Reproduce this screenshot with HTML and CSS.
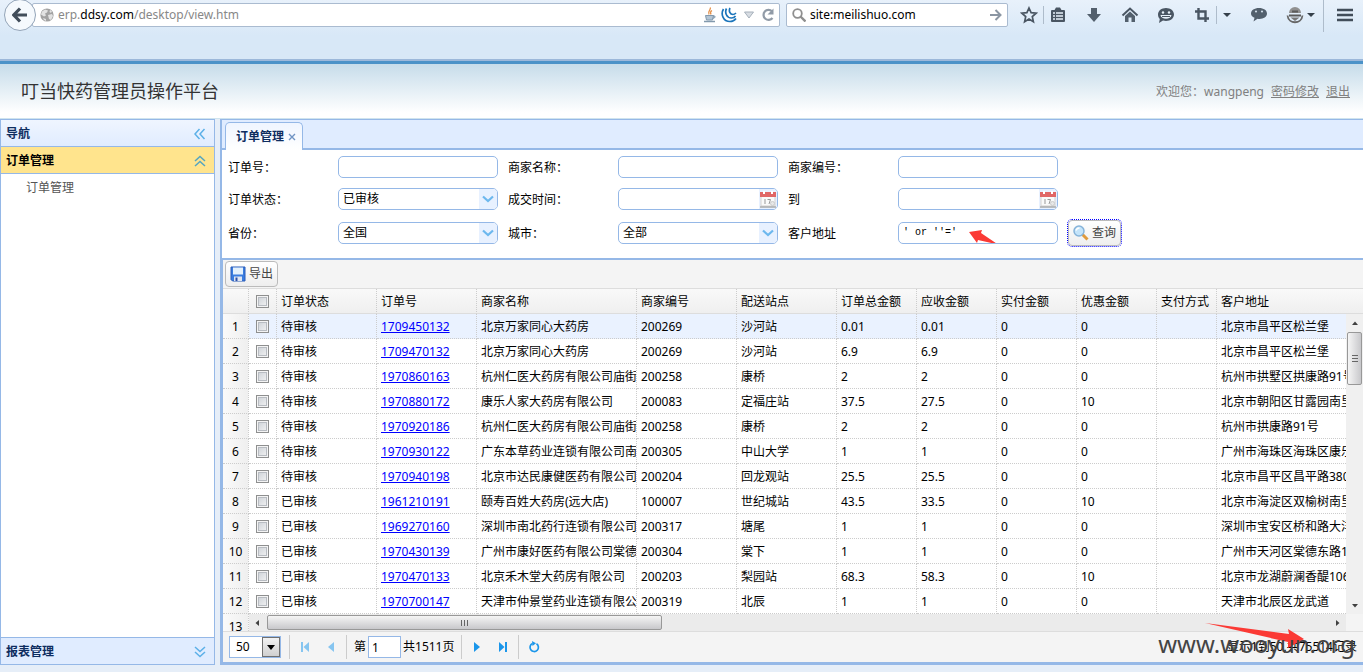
FILE: index.html
```html
<!DOCTYPE html>
<html lang="zh-CN">

<head>
    <meta charset="UTF-8">
    <meta name="viewport" content="width=device-width, initial-scale=1.0">
    <title>叮当快药管理员操作平台</title>
    <link rel="stylesheet" href="styles.css">
</head>

<body>
    <!-- 浏览器工具栏 -->
    <div class="browser">
        <button class="back" aria-label="后退">
            <svg width="16" height="16" viewBox="0 0 16 16"><path d="M8 1.5L1.8 8 8 14.5M2.5 8H15" fill="none" stroke="#414d5a" stroke-width="3.2"/></svg>
        </button>
        <div class="address">
            <svg width="14" height="14" viewBox="0 0 14 14"><circle cx="7" cy="7" r="6.6" fill="#a2a2a2"/><path d="M2 3.5l3-2 3 1-1 2-2 1 1 2-2 1-3-2zM8 7l4-1 1 2-2 4-2-1zM10 2l2 1-1 2-1.500-1zM3 10l3 1 0 2-2-1z" fill="#e2e2e2"/></svg>
            <span class="url">erp.<b>ddsy.com</b>/desktop/view.htm</span>
            <svg width="14" height="16" viewBox="0 0 14 16"><path d="M7 0.500c2 2-3 3.500-1 7M9 3.500c-2 1-2 2-1 4" fill="none" stroke="#e5914a" stroke-width="1.300"/><path d="M2.500 8.500h8l-1 4.500h-6zM10 9c3-.5 3 2-.5 2.500" fill="#b4c5d4" stroke="#8299ad"/><path d="M1 14.500h11" stroke="#8299ad" stroke-width="1.500"/></svg>
            <svg width="16" height="16" viewBox="0 0 16 16"><path d="M2.500 2C-.5 7 2 14.500 9 14.500c3 0 4.500-1 6-3M5.500 1.500c-2 4 0 9.500 5 9.500 2 0 3-.5 4-2M9 1c-1.500 3 0 6.500 3 6.500 1.500 0 2-.5 3-1.500" fill="none" stroke="#1b75bb" stroke-width="1.700"/></svg>
            <svg class="drop" width="10" height="8" viewBox="0 0 10 8"><path d="M.5 1h9L5 7z" fill="#d8dde3" stroke="#a6b0bb"/></svg>
            <svg width="14" height="14" viewBox="0 0 14 14"><path d="M11 3.300A5 5 0 1 0 11.500 10" fill="none" stroke="#919ba7" stroke-width="2.200"/><path d="M12.500.5v6h-6z" fill="#919ba7"/></svg>
        </div>
        <div class="search">
            <svg width="14" height="14" viewBox="0 0 14 14"><circle cx="5.500" cy="5.500" r="4.300" fill="none" stroke="#8f8f8f" stroke-width="1.800"/><path d="M8.500 8.500l5 5" stroke="#8f8f8f" stroke-width="2.400"/></svg>
            <input type="text" value="site:meilishuo.com" aria-label="搜索">
            <svg width="12" height="12" viewBox="0 0 12 12"><path d="M0 6h10M5.500 1l5 5-5 5" fill="none" stroke="#8b96a3" stroke-width="2"/></svg>
        </div>
        <div class="tools">
            <span class="group">
                <svg width="18" height="18" viewBox="0 0 18 18"><path d="M9 2l2.100 4.700 5 .5-3.800 3.400 1.100 5.100L9 13.100l-4.400 2.600 1.100-5.100L1.900 7.200l5-.5z" fill="none" stroke="#4a5663" stroke-width="1.700"/></svg>
                <i class="line"></i>
                <svg width="18" height="18" viewBox="0 0 18 18"><path d="M3 4h12a1 1 0 0 1 1 1v10a1 1 0 0 1-1 1H3a1 1 0 0 1-1-1V5a1 1 0 0 1 1-1zM5.500 4L7 1.500h4L12.500 4z" fill="#4a5663"/><path d="M4 7h2M7 7h7M4 10h2M7 10h7M4 13h2M7 13h7" stroke="#e8f1fa" stroke-width="1.500"/></svg>
            </span>
            <svg width="18" height="18" viewBox="0 0 18 18"><path d="M6 2h6v6h4l-7 8-7-8h4z" fill="#53606d"/></svg>
            <svg width="18" height="18" viewBox="0 0 18 18"><path d="M1.500 9.500L9 2.500l7.500 7" fill="none" stroke="#4a5663" stroke-width="2"/><path d="M4 10l5-4.500 5 4.500v6h-3.500v-4.500h-3V16H4z" fill="#53606d"/></svg>
            <svg width="18" height="18" viewBox="0 0 18 18"><path d="M9 2c4.500 0 8 2.800 8 6.500S13.500 15 9 15c-1 0-2-.1-3-.4L2 17l.8-4C1.600 11.800 1 10.300 1 8.500 1 4.800 4.500 2 9 2z" fill="#4a5663"/><circle cx="6" cy="6.500" r="1.200" fill="#e8f1fa"/><circle cx="12" cy="6.500" r="1.200" fill="#e8f1fa"/><path d="M3.500 9h11c-.5 5-10.500 5-11 0z" fill="#e8f1fa"/><path d="M5 10.500h8" stroke="#4a5663"/></svg>
            <span class="group">
                <svg width="18" height="18" viewBox="0 0 18 18"><path d="M5.500 2v10.500H16M2 5.500h10.500V16" fill="none" stroke="#4a5663" stroke-width="2.400"/></svg>
                <i class="line"></i>
                <svg width="10" height="18" viewBox="0 0 10 18"><path d="M1 7h8l-4 4z" fill="#35404b"/></svg>
            </span>
            <svg width="18" height="18" viewBox="0 0 18 18"><path d="M9 2c4.600 0 8 2.200 8 5.600S13.500 13 9.500 13c-.7 0-1.400 0-2-.2L3.500 15.500l1-3.700C2.300 11 1 9.600 1 7.600 1 4.200 4.400 2 9 2z" fill="#53606d"/><circle cx="6" cy="5.500" r="1.100" fill="#cfdbe7"/><circle cx="12" cy="5.500" r="1.100" fill="#cfdbe7"/></svg>
            <span class="group tight">
                <svg width="18" height="18" viewBox="0 0 18 18"><path d="M3 7a6 6 0 0 1 12 0z" fill="#909090"/><path d="M3 9.500h12M6 5.500h6" stroke="#5b5b5b" stroke-width="1.800"/><path d="M1.500 9.500c1 9 14 9 15 0" fill="none" stroke="#666" stroke-width="1.800"/><path d="M4.500 11.500h9l-4.500 3.500z" fill="#777"/></svg>
                <svg width="10" height="18" viewBox="0 0 10 18"><path d="M1 7h8l-4 4z" fill="#35404b"/></svg>
            </span>
        </div>
        <i class="line tall"></i>
        <button class="menu" aria-label="菜单">
            <svg width="18" height="16" viewBox="0 0 18 16"><path d="M1 3h16M1 8h16M1 13h16" stroke="#414d5a" stroke-width="2.600"/></svg>
        </button>
    </div>

    <!-- 页头 -->
    <header class="header">
        <h1>叮当快药管理员操作平台</h1>
        <div class="user"><span>欢迎您：wangpeng</span><a href="#">密码修改</a><a href="#">退出</a></div>
    </header>

    <div class="layout">
        <!-- 左侧导航 -->
        <nav class="side">
            <div class="side-title">导航
                <svg width="12" height="12" viewBox="0 0 12 12"><path d="M5.500 1l-4.500 5 4.500 5M10.500 1L6 6l4.500 5" fill="none" stroke="#5cb0e8" stroke-width="1.500"/></svg>
            </div>
            <button class="side-title open">订单管理
                <svg width="12" height="12" viewBox="0 0 12 12"><path d="M1 6l5-4.500L11 6M1 11l5-4.500L11 11" fill="none" stroke="#55a5c0" stroke-width="1.500"/></svg>
            </button>
            <div class="side-body"><a href="#">订单管理</a></div>
            <button class="side-title last">报表管理
                <svg width="12" height="12" viewBox="0 0 12 12"><path d="M1 1l5 4.500L11 1M1 6l5 4.500L11 6" fill="none" stroke="#5cb0e8" stroke-width="1.500"/></svg>
            </button>
        </nav>

        <!-- 主区域 -->
        <main class="main">
            <div class="tabs">
                <div class="tab">订单管理
                    <button aria-label="关闭"><svg width="8" height="8" viewBox="0 0 8 8"><path d="M1 1l6 6M7 1L1 7" stroke="#7094c4" stroke-width="1.400"/></svg></button>
                </div>
            </div>

            <!-- 查询条件 -->
            <form class="query">
                <label for="orderNo">订单号：</label>
                <div class="field"><input type="text" id="orderNo"></div>
                <label for="shopName">商家名称：</label>
                <div class="field"><input type="text" id="shopName"></div>
                <label for="shopNo">商家编号：</label>
                <div class="field"><input type="text" id="shopNo"></div>
                <span></span>

                <label for="status">订单状态：</label>
                <div class="field"><select id="status"><option>已审核</option></select><span class="trigger"><svg width="12" height="8" viewBox="0 0 12 8"><path d="M1 1.500l5 4.500 5-4.500" fill="none" stroke="#6db8ee" stroke-width="2.200"/></svg></span></div>
                <label for="dateFrom">成交时间：</label>
                <div class="field"><input type="text" id="dateFrom"><span class="trigger"><svg width="16" height="17" viewBox="0 0 16 17"><path d="M1 5h14v10H1z" fill="#fafafa" stroke="#d5d1cf"/><path d="M0 1h16v5H0z" fill="#e06666"/><path d="M3 0h2v3H3zM11 0h2v3h-2z" fill="#fff"/><path d="M0 16h16" stroke="#aaa" stroke-width="1.500"/><path d="M5 8v5M7.500 8.500h3L9 13" fill="none" stroke="#999"/><circle cx="12.500" cy="12.500" r="2" fill="#e8e8e8" stroke="#ccc"/></svg></span></div>
                <label for="dateTo">到</label>
                <div class="field"><input type="text" id="dateTo"><span class="trigger"><svg width="16" height="17" viewBox="0 0 16 17"><path d="M1 5h14v10H1z" fill="#fafafa" stroke="#d5d1cf"/><path d="M0 1h16v5H0z" fill="#e06666"/><path d="M3 0h2v3H3zM11 0h2v3h-2z" fill="#fff"/><path d="M0 16h16" stroke="#aaa" stroke-width="1.500"/><path d="M5 8v5M7.500 8.500h3L9 13" fill="none" stroke="#999"/><circle cx="12.500" cy="12.500" r="2" fill="#e8e8e8" stroke="#ccc"/></svg></span></div>
                <span></span>

                <label for="province">省份：</label>
                <div class="field"><select id="province"><option>全国</option></select><span class="trigger"><svg width="12" height="8" viewBox="0 0 12 8"><path d="M1 1.500l5 4.500 5-4.500" fill="none" stroke="#6db8ee" stroke-width="2.200"/></svg></span></div>
                <label for="city">城市：</label>
                <div class="field"><select id="city"><option>全部</option></select><span class="trigger"><svg width="12" height="8" viewBox="0 0 12 8"><path d="M1 1.500l5 4.500 5-4.500" fill="none" stroke="#6db8ee" stroke-width="2.200"/></svg></span></div>
                <label for="addr">客户地址</label>
                <div class="field">
                    <input type="text" id="addr" class="mono" value="' or ''='">
                    <svg class="arrow" width="32" height="18" viewBox="0 0 32 18"><path d="M1 3l13-2-1 3 17 11.500L10 11l-1 3z" fill="#fb3a35"/></svg>
                </div>
                <button type="button" class="btn focus">
                    <svg width="16" height="16" viewBox="0 0 16 16"><path d="M9.500 9.500l5 5" stroke="#e09a3c" stroke-width="3"/><circle cx="6" cy="6" r="5" fill="#c4e4fa" stroke="#86b3d9" stroke-width="1.500"/><path d="M3 5.500C3.500 4 5 3 6.500 3" fill="none" stroke="#fff" stroke-width="1.500"/></svg>查询
                </button>
            </form>

            <!-- 订单列表 -->
            <section class="panel">
                <div class="toolbar">
                    <button class="btn">
                        <svg width="16" height="16" viewBox="0 0 16 16"><path d="M1 1h14v14H2.500L1 13.500z" fill="#3a7de0" stroke="#2a5cb8"/><path d="M3 1.500h10v7H3z" fill="#e4f1fc"/><path d="M4 10.500h8V15H4z" fill="#dfe6f2"/><path d="M5.500 11.500h2V15h-2z" fill="#2c50a8"/></svg>导出
                    </button>
                </div>
                <div class="grid">
                    <!-- 行号 -->
                    <div class="frozen">
                        <table>
                            <thead><tr><th></th></tr></thead>
                            <tbody>
                                <tr><td>1</td></tr>
                                <tr><td>2</td></tr>
                                <tr><td>3</td></tr>
                                <tr><td>4</td></tr>
                                <tr><td>5</td></tr>
                                <tr><td>6</td></tr>
                                <tr><td>7</td></tr>
                                <tr><td>8</td></tr>
                                <tr><td>9</td></tr>
                                <tr><td>10</td></tr>
                                <tr><td>11</td></tr>
                                <tr><td>12</td></tr>
                                <tr><td>13</td></tr>
                            </tbody>
                        </table>
                    </div>
                    <div class="view">
                        <table class="head">
                            <colgroup><col class="ck"><col class="w100"><col class="w100"><col class="w160"><col class="w100"><col class="w100"><col class="w80"><col class="w80"><col class="w80"><col class="w80"><col class="w60"><col></colgroup>
                            <tr><th><input type="checkbox" aria-label="全选"></th><th>订单状态</th><th>订单号</th><th>商家名称</th><th>商家编号</th><th>配送站点</th><th>订单总金额</th><th>应收金额</th><th>实付金额</th><th>优惠金额</th><th>支付方式</th><th>客户地址</th></tr>
                        </table>
                        <div class="scroller">
                            <div class="rows">
                                <table>
                                    <colgroup><col class="ck"><col class="w100"><col class="w100"><col class="w160"><col class="w100"><col class="w100"><col class="w80"><col class="w80"><col class="w80"><col class="w80"><col class="w60"><col></colgroup>
                                    <tr class="hover"><td><input type="checkbox" aria-label="选择第1行"></td><td>待审核</td><td><a href="#">1709450132</a></td><td>北京万家同心大药房</td><td>200269</td><td>沙河站</td><td>0.01</td><td>0.01</td><td>0</td><td>0</td><td></td><td>北京市昌平区松兰堡</td></tr>
                                    <tr><td><input type="checkbox" aria-label="选择第2行"></td><td>待审核</td><td><a href="#">1709470132</a></td><td>北京万家同心大药房</td><td>200269</td><td>沙河站</td><td>6.9</td><td>6.9</td><td>0</td><td>0</td><td></td><td>北京市昌平区松兰堡</td></tr>
                                    <tr><td><input type="checkbox" aria-label="选择第3行"></td><td>待审核</td><td><a href="#">1970860163</a></td><td>杭州仁医大药房有限公司庙街</td><td>200258</td><td>康桥</td><td>2</td><td>2</td><td>0</td><td>0</td><td></td><td>杭州市拱墅区拱康路91号</td></tr>
                                    <tr><td><input type="checkbox" aria-label="选择第4行"></td><td>待审核</td><td><a href="#">1970880172</a></td><td>康乐人家大药房有限公司</td><td>200083</td><td>定福庄站</td><td>37.5</td><td>27.5</td><td>0</td><td>10</td><td></td><td>北京市朝阳区甘露园南里</td></tr>
                                    <tr><td><input type="checkbox" aria-label="选择第5行"></td><td>待审核</td><td><a href="#">1970920186</a></td><td>杭州仁医大药房有限公司庙街</td><td>200258</td><td>康桥</td><td>2</td><td>2</td><td>0</td><td>0</td><td></td><td>杭州市拱康路91号</td></tr>
                                    <tr><td><input type="checkbox" aria-label="选择第6行"></td><td>待审核</td><td><a href="#">1970930122</a></td><td>广东本草药业连锁有限公司南</td><td>200305</td><td>中山大学</td><td>1</td><td>1</td><td>0</td><td>0</td><td></td><td>广州市海珠区海珠区康乐</td></tr>
                                    <tr><td><input type="checkbox" aria-label="选择第7行"></td><td>待审核</td><td><a href="#">1970940198</a></td><td>北京市达民康健医药有限公司</td><td>200204</td><td>回龙观站</td><td>25.5</td><td>25.5</td><td>0</td><td>0</td><td></td><td>北京市昌平区昌平路380</td></tr>
                                    <tr><td><input type="checkbox" aria-label="选择第8行"></td><td>已审核</td><td><a href="#">1961210191</a></td><td>颐寿百姓大药房(远大店)</td><td>100007</td><td>世纪城站</td><td>43.5</td><td>33.5</td><td>0</td><td>10</td><td></td><td>北京市海淀区双榆树南里</td></tr>
                                    <tr><td><input type="checkbox" aria-label="选择第9行"></td><td>已审核</td><td><a href="#">1969270160</a></td><td>深圳市南北药行连锁有限公司</td><td>200317</td><td>塘尾</td><td>1</td><td>1</td><td>0</td><td>0</td><td></td><td>深圳市宝安区桥和路大洋</td></tr>
                                    <tr><td><input type="checkbox" aria-label="选择第10行"></td><td>已审核</td><td><a href="#">1970430139</a></td><td>广州市康好医药有限公司棠德</td><td>200304</td><td>棠下</td><td>1</td><td>1</td><td>0</td><td>0</td><td></td><td>广州市天河区棠德东路1</td></tr>
                                    <tr><td><input type="checkbox" aria-label="选择第11行"></td><td>已审核</td><td><a href="#">1970470133</a></td><td>北京禾木堂大药房有限公司</td><td>200203</td><td>梨园站</td><td>68.3</td><td>58.3</td><td>0</td><td>10</td><td></td><td>北京市龙湖蔚澜香醍106</td></tr>
                                    <tr><td><input type="checkbox" aria-label="选择第12行"></td><td>已审核</td><td><a href="#">1970700147</a></td><td>天津市仲景堂药业连锁有限公</td><td>200319</td><td>北辰</td><td>1</td><td>1</td><td>0</td><td>0</td><td></td><td>天津市北辰区龙武道</td></tr>
                                </table>
                            </div>
                            <div class="vbar">
                                <svg width="16" height="18" viewBox="0 0 16 18"><path d="M5 11h6L8 7.500z" fill="#404040"/></svg>
                                <span class="thumb"><svg width="8" height="9" viewBox="0 0 8 9"><path d="M1 1.500h6M1 4.500h6M1 7.500h6" stroke="#666"/></svg></span>
                                <svg class="end" width="16" height="18" viewBox="0 0 16 18"><path d="M5 8h6l-3 3.500z" fill="#404040"/></svg>
                            </div>
                        </div>
                        <div class="hbar">
                            <svg width="18" height="16" viewBox="0 0 18 16"><path d="M10 5v6L6.500 8z" fill="#404040"/></svg>
                            <span class="thumb"><svg width="9" height="8" viewBox="0 0 9 8"><path d="M1.500 1v6M4.500 1v6M7.500 1v6" stroke="#666"/></svg></span>
                            <svg class="end" width="18" height="16" viewBox="0 0 18 16"><path d="M8 5v6l3.500-3z" fill="#404040"/></svg>
                        </div>
                    </div>
                </div>
                <!-- 分页 -->
                <div class="pager">
                    <div class="size">
                        <select aria-label="每页条数"><option>50</option></select>
                        <span><svg width="8" height="5" viewBox="0 0 8 5"><path d="M0 0h8L4 5z" fill="#000"/></svg></span>
                    </div>
                    <i class="sep"></i>
                    <button aria-label="首页"><svg width="10" height="12" viewBox="0 0 10 12"><path d="M1 1h2v10H1zM9 1v10L3.500 6z" fill="#86c5f0"/></svg></button>
                    <button aria-label="上一页"><svg width="10" height="12" viewBox="0 0 10 12"><path d="M8 1v10L2 6z" fill="#86c5f0"/></svg></button>
                    <i class="sep"></i>
                    <div class="jump">
                        <label for="page">第</label>
                        <input type="text" id="page" value="1">
                        <span>共1511页</span>
                    </div>
                    <i class="sep"></i>
                    <button aria-label="下一页"><svg width="10" height="12" viewBox="0 0 10 12"><path d="M2 1v10l6-5z" fill="#1b96ea"/></svg></button>
                    <button aria-label="末页"><svg width="10" height="12" viewBox="0 0 10 12"><path d="M7 1h2v10H7zM1 1v10l5.500-5z" fill="#1b96ea"/></svg></button>
                    <i class="sep"></i>
                    <button aria-label="刷新"><svg width="12" height="12" viewBox="0 0 12 12"><path d="M8.500 2.800a4.200 4.200 0 1 1-4-.3" fill="none" stroke="#1b96ea" stroke-width="1.700"/><path d="M4 0l4 2.300L4.500 5z" fill="#1b96ea"/></svg></button>
                    <span class="info">显示1到50,共75514记录</span>
                </div>
                <svg class="pointer" width="102" height="28" viewBox="0 0 102 28"><path d="M1 1l84 11-1-5 16 10-16 9 0-6z" fill="#fb3a35"/></svg>
                <div class="mark">www.wooyun.org</div>
            </section>
        </main>
    </div>
</body>

</html>
```

FILE: styles.css
```css
* {
    margin: 0;
    padding: 0;
    box-sizing: border-box;
}

body {
    height: 100vh;
    display: flex;
    flex-direction: column;
    background: #eef4ff;
    color: #000;
    font-family: "Noto Sans", "Noto Sans CJK SC", sans-serif;
    font-size: 12px;
    line-height: 16px;
    overflow: hidden;
}

button,
input,
select {
    font: inherit;
    color: inherit;
    border: 0;
    background: none;
    outline: 0;
}

svg {
    display: block;
    flex: none;
}

/* 浏览器工具栏 */
.browser {
    height: 61px;
    flex: none;
    display: flex;
    align-items: flex-start;
    padding: 0 9px 0 4px;
    background: linear-gradient(#e8f1fb, #d8e8f7 60%);
    border-bottom: 2px solid #9cb8da;
}

.back {
    width: 32px;
    height: 32px;
    margin: -1px -4px 0 0;
    flex: none;
    display: flex;
    justify-content: center;
    align-items: center;
    border: 1px solid #93a4b8;
    border-radius: 50%;
    background: #f5f9fd;
    z-index: 1;
}

.address,
.search {
    height: 24px;
    margin-top: 3px;
    display: flex;
    align-items: center;
    gap: 4px;
    border: 1px solid #aabbd0;
    border-radius: 2px;
    background: #fff;
}

.address {
    flex: 1;
    padding: 0 4px 0 7px;
}

.url {
    flex: 1;
    color: #888;
}

.url b {
    color: #000;
    font-weight: normal;
}

.drop {
    margin: 0 3px;
}

.search {
    width: 222px;
    margin-left: 6px;
    padding: 0 5px;
}

.search input {
    flex: 1;
    min-width: 0;
}

.tools {
    height: 30px;
    margin: 0 7px 0 12px;
    display: flex;
    align-items: center;
    gap: 18px;
}

.group {
    display: flex;
    align-items: center;
    gap: 5px;
}

.group.tight {
    gap: 2px;
}

.line {
    width: 1px;
    height: 18px;
    background: #aebccb;
}

.line.tall {
    height: 32px;
}

.menu {
    height: 30px;
    margin-left: 12px;
}

/* 页头 */
.header {
    height: 58px;
    flex: none;
    display: flex;
    justify-content: space-between;
    align-items: center;
    padding: 0 13px 0 21px;
    border-top: 3px solid #4b92c8;
    border-bottom: 1px solid #cfe3ee;
    background: linear-gradient(#c6dcea, #fff 90%);
}

.header h1 {
    font-size: 18px;
    font-weight: normal;
    color: #333;
}

.user {
    display: flex;
    gap: 7px;
    padding-top: 2px;
    color: #808080;
}

.user a {
    color: #808080;
}

/* 布局 */
.layout {
    flex: 1;
    min-height: 0;
    display: flex;
    gap: 5px;
    padding-bottom: 7px;
    background: #e6eef8;
}

.side {
    width: 215px;
    flex: none;
    display: flex;
    flex-direction: column;
    border: 1px solid #95b8e7;
    background: #fff;
}

.side-title {
    height: 27px;
    flex: none;
    display: flex;
    justify-content: space-between;
    align-items: center;
    padding: 2px 8px 0 5px;
    border-bottom: 1px solid #95b8e7;
    background: linear-gradient(#eff5ff, #e0ecff);
    color: #0e2d5f;
    font-weight: bold;
}

.side-title.open {
    background: #ffe48d;
    color: #000;
}

.side-title.last {
    border-top: 1px solid #95b8e7;
    border-bottom: 0;
    background: #e0ecff;
}

.side-body {
    flex: 1;
    padding: 6px 25px;
}

.side-body a {
    color: #555;
    text-decoration: none;
}

.main {
    flex: 1;
    min-width: 0;
    display: flex;
    flex-direction: column;
    border-top: 1px solid #95b8e7;
    border-left: 2px solid #95b8e7;
    background: #fff;
}

.tabs {
    height: 30px;
    flex: none;
    display: flex;
    align-items: flex-end;
    padding-left: 3px;
    border-bottom: 2px solid #95b8e7;
    background: #e0ecff;
}

.tab {
    height: 28px;
    margin-bottom: -2px;
    display: flex;
    align-items: center;
    gap: 4px;
    padding: 0 6px 0 10px;
    border: 1px solid #95b8e7;
    border-bottom: 0;
    border-radius: 5px 5px 0 0;
    background: linear-gradient(#eff5ff, #fff);
    color: #0e2d5f;
    font-weight: bold;
}

/* 查询条件 */
.query {
    flex: none;
    display: grid;
    grid-template-columns: 110px 170px 110px 170px 110px 170px auto;
    grid-template-rows: 32px 32px 36px;
    justify-content: start;
    align-items: center;
    padding: 1px 6px 7px;
}

.query label {
    padding-top: 2px;
}

.field {
    width: 160px;
    height: 22px;
    display: flex;
    position: relative;
    border: 1px solid #95b8e7;
    border-radius: 5px;
    overflow: hidden;
    background: #fff;
}

.field input,
.field select {
    flex: 1;
    min-width: 0;
    padding: 0 4px;
    appearance: none;
}

.field .mono {
    font-family: "Liberation Mono", monospace;
    font-size: 10px;
}

.trigger {
    width: 18px;
    display: flex;
    justify-content: center;
    align-items: center;
    background: #e8f1ff;
}

.arrow {
    position: absolute;
    left: 69px;
    top: 6px;
}

.btn {
    height: 26px;
    display: flex;
    align-items: center;
    gap: 3px;
    padding: 0 4px;
    border: 1px solid #bbb;
    border-radius: 4px;
    background: linear-gradient(#fff, #eee);
    color: #444;
}

.btn.focus {
    outline: 1px dotted #00f;
}

/* 列表 */
.panel {
    flex: 1;
    min-height: 0;
    display: flex;
    flex-direction: column;
    position: relative;
    border-top: 2px solid #95b8e7;
    border-bottom: 3px solid #95b8e7;
    border-left: 1px solid #95b8e7;
    background: #f4f4f4;
}

.toolbar {
    height: 29px;
    flex: none;
    padding: 1px 2px;
    border-bottom: 1px solid #ddd;
}

.grid {
    flex: 1;
    min-height: 0;
    display: flex;
    background: #fff;
}

.frozen {
    width: 26px;
    flex: none;
    overflow: hidden;
    background: #f5f5f5;
}

.view {
    flex: 1;
    min-width: 0;
    display: flex;
    flex-direction: column;
    background: #f4f4f4;
}

.grid table {
    width: 100%;
    table-layout: fixed;
    border-collapse: separate;
    border-spacing: 0;
}

.grid th,
.grid td {
    height: 25px;
    padding: 2px 4px 0;
    border-right: 1px dotted #ccc;
    border-bottom: 1px dotted #ccc;
    font-weight: normal;
    text-align: left;
    white-space: nowrap;
    overflow: hidden;
}

.grid th {
    border-bottom: 1px solid #ddd;
    background: linear-gradient(#f9f9f9, #efefef);
}

.grid th:last-child,
.grid td:last-child {
    border-right: 0;
}

.grid .frozen th,
.grid .frozen td {
    padding: 2px 0 0;
    border-right: 1px dotted #ccc;
    text-align: center;
}

.frozen td {
    background: linear-gradient(to right, #fafafa, #efefef);
}

.rows table {
    background: #fff;
}

.ck {
    width: 28px;
}

.w60 {
    width: 60px;
}

.w80 {
    width: 80px;
}

.w100 {
    width: 100px;
}

.w160 {
    width: 160px;
}

.grid .view th:first-child,
.grid .view td:first-child {
    padding: 0 7px;
}

.hover {
    background: #eaf2ff;
}

.rows a {
    color: #00f;
}

input[type="checkbox"] {
    width: 13px;
    height: 13px;
    display: block;
    appearance: none;
    border: 1px solid #8e8f8f;
    box-shadow: inset 0 0 0 1px #f4f4f4, inset 0 0 0 2px #b8bcc2;
    background: linear-gradient(135deg, #c9ced4, #f6f6f6);
}

/* 滚动条 */
.scroller {
    flex: 1;
    min-height: 0;
    display: flex;
}

.rows {
    flex: 1;
    min-width: 0;
    overflow: hidden;
}

.vbar {
    width: 17px;
    display: flex;
    flex-direction: column;
    align-items: center;
    background: #f0f0f0;
}

.hbar {
    height: 17px;
    flex: none;
    margin-right: 17px;
    display: flex;
    align-items: center;
    background: #ebebeb;
}

.thumb {
    display: flex;
    justify-content: center;
    align-items: center;
    border: 1px solid #989898;
    border-radius: 2px;
}

.vbar .thumb {
    width: 15px;
    height: 53px;
    background: linear-gradient(to right, #f5f5f5, #c8c8cb);
}

.hbar .thumb {
    width: 36%;
    height: 15px;
    background: linear-gradient(#f5f5f5, #c8c8cb);
}

.vbar .end {
    margin-top: auto;
}

.hbar .end {
    margin-left: auto;
}

/* 分页 */
.pager {
    height: 31px;
    flex: none;
    display: flex;
    align-items: center;
    padding: 0 6px;
    border-top: 1px solid #ddd;
    background: #f4f4f4;
}

.size {
    width: 52px;
    height: 22px;
    margin-right: 6px;
    display: flex;
    border: 1px solid #95b8e7;
    background: #fff;
}

.size select {
    flex: 1;
    min-width: 0;
    padding-left: 6px;
    appearance: none;
}

.size span {
    width: 18px;
    display: flex;
    justify-content: center;
    align-items: center;
    border: 1px solid #707070;
    background: linear-gradient(#f2f2f2, #d0d0d0);
}

.sep {
    width: 1px;
    height: 24px;
    margin: 0 2px;
    background: #ccc;
}

.pager button {
    width: 26px;
    height: 26px;
    display: flex;
    justify-content: center;
    align-items: center;
}

.jump {
    display: flex;
    align-items: center;
    gap: 2px;
    padding: 0 5px;
}

.jump input {
    width: 33px;
    height: 22px;
    padding: 0 3px;
    border: 1px solid #95b8e7;
    background: #fff;
}

.info {
    margin-left: auto;
}

.pointer {
    position: absolute;
    right: 57px;
    bottom: 12px;
}

.mark {
    position: absolute;
    right: 8px;
    bottom: 2px;
    color: #444;
    font-size: 24px;
    line-height: 32px;
}
```
